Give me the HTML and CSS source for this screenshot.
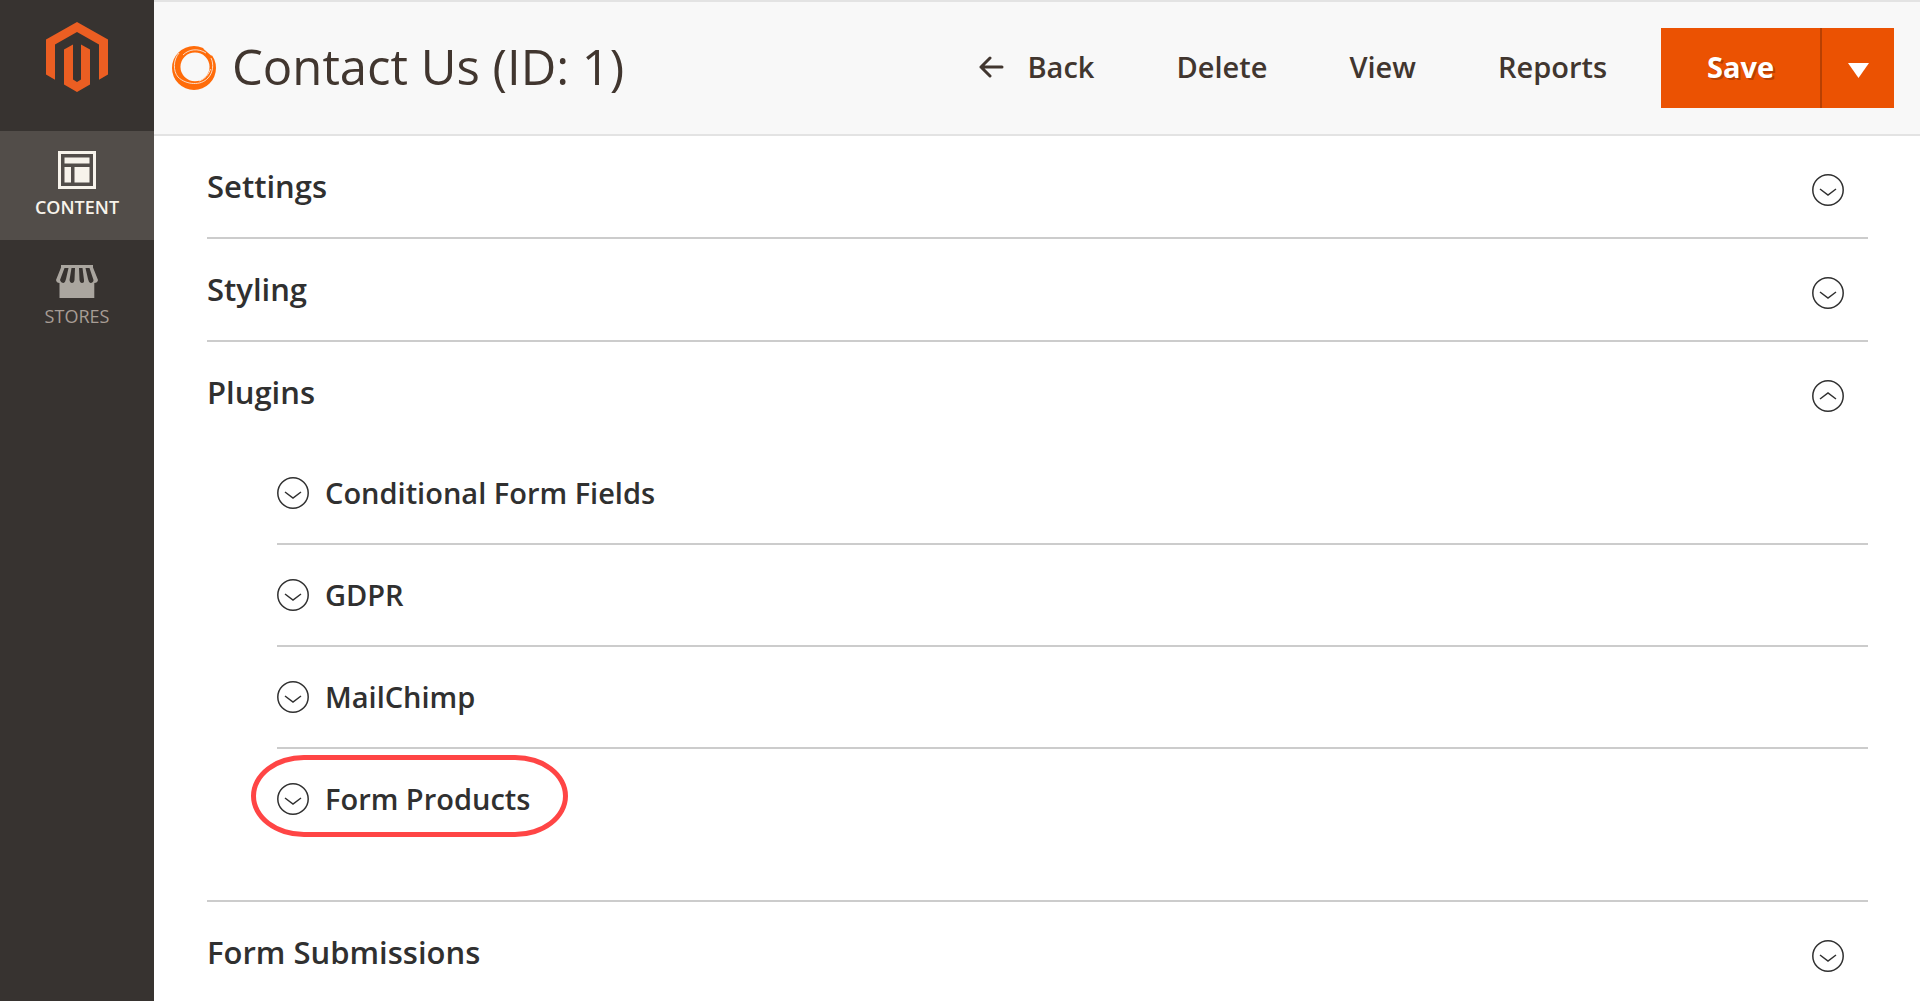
FILE: index.html
```html
<!DOCTYPE html>
<html lang="en">
<head>
<meta charset="utf-8" />
<title>Contact Us (ID: 1)</title>
<link rel="stylesheet" href="styles.css">
</head>

<body>

<!-- shared icons -->
<svg class="sprite" aria-hidden="true">
	<symbol id="icon-down" viewBox="0 0 32 32">
		<circle cx="16" cy="16" r="15.2" />
		<path d="M8 15l8 6 8-6" />
	</symbol>
	<symbol id="icon-up" viewBox="0 0 32 32">
		<circle cx="16" cy="16" r="15.2" />
		<path d="M8 19l8-6 8 6" />
	</symbol>
</svg>

<nav class="sidebar">

	<a href="#" class="logo" aria-label="Dashboard">
		<svg width="62" height="70" viewBox="0 0 62 70">
			<path d="M31 0L62 17.500V52.500L53 57.700V22.500L31 10L9 22.500V57.700L0 52.500V17.500Z" />
			<path d="M18 27.500L27 22.500V57.500L31 60L35 57.500V22.500L44 27.500V62.500L31 70L18 62.500Z" />
		</svg>
	</a>

	<a href="#" class="menu-item active">
		<svg width="42" height="38" viewBox="0 0 42 38">
			<path fill-rule="evenodd" d="M2 0H40V38H2ZM5 3V35H37V3Z" />
			<path d="M8.500 6.500H33.500V12.500H8.500ZM8.500 16H15V31.500H8.500ZM18.500 16H33.500V31.500H18.500Z" />
		</svg>
		<span>Content</span>
	</a>

	<a href="#" class="menu-item">
		<svg width="42" height="38" viewBox="0 0 42 38">
			<path fill-rule="evenodd" d="M5 5H37V7.500L42 20Q41.500 23 38.300 23V38H3.500V23Q.5 23 0 20L5 7.500ZM8.500 8L4 20Q5 23 7.500 23Q9.500 22 10 19L12.500 8ZM15.500 8L13.500 20Q14 23 16 23Q18 23 18.500 20L19 8ZM23 8L23.500 20Q24 23 26 23Q28.500 23 28 20L26.500 8ZM29.500 8L32 19Q32.500 22 34.500 23Q37.500 22.500 37.500 20L33.500 8Z" />
		</svg>
		<span>Stores</span>
	</a>

</nav>

<div class="page">

	<header class="page-header">

		<svg class="ring" width="44" height="44" viewBox="0 0 44 44">
			<path fill-rule="evenodd" d="M22 0A22 22 0 0 1 22 44A22 22 0 0 1 22 0ZM23 6.500A14.500 14.300 0 0 0 23 35.200A14.500 14.300 0 0 0 23 6.500Z" />
			<path class="cut" d="M7 7C1 14 1 25 6 31C14 39 29 40 36 32C41 27 42 18 39 12" />
			<path class="cut" d="M11 9C17 3 26 2 34 7" />
			<path class="cut" d="M27 35C33 33 37 28 38.500 23" />
			<path class="cut wide" d="M32 2L40 9" />
		</svg>

		<h1>Contact Us (ID: 1)</h1>

		<div class="actions">
			<button type="button" class="action back">
				<svg width="25" height="22" viewBox="0 0 25 22">
					<path d="M11 2L2 11L11 20M2 11H23" />
				</svg>
				Back
			</button>
			<button type="button" class="action">Delete</button>
			<button type="button" class="action">View</button>
			<button type="button" class="action">Reports</button>
		</div>

		<div class="split">
			<button type="button" class="save">Save</button>
			<button type="button" class="toggle" aria-label="More save options">
				<svg width="21" height="15" viewBox="0 0 21 15">
					<path d="M0 0H21L10.500 15Z" />
				</svg>
			</button>
		</div>

	</header>

	<main class="sections">

		<section class="section">
			<button type="button" class="section-title">
				Settings
				<svg class="icon"><use href="#icon-down" /></svg>
			</button>
		</section>

		<section class="section">
			<button type="button" class="section-title">
				Styling
				<svg class="icon"><use href="#icon-down" /></svg>
			</button>
		</section>

		<section class="section">
			<button type="button" class="section-title">
				Plugins
				<svg class="icon"><use href="#icon-up" /></svg>
			</button>

			<ul class="plugins">
				<li>
					<button type="button" class="plugin-title">
						<svg class="icon"><use href="#icon-down" /></svg>
						Conditional Form Fields
					</button>
				</li>
				<li>
					<button type="button" class="plugin-title">
						<svg class="icon"><use href="#icon-down" /></svg>
						GDPR
					</button>
				</li>
				<li>
					<button type="button" class="plugin-title">
						<svg class="icon"><use href="#icon-down" /></svg>
						MailChimp
					</button>
				</li>
				<li class="marked">
					<button type="button" class="plugin-title">
						<svg class="icon"><use href="#icon-down" /></svg>
						Form Products
					</button>
				</li>
			</ul>
		</section>

		<section class="section">
			<button type="button" class="section-title">
				Form Submissions
				<svg class="icon"><use href="#icon-down" /></svg>
			</button>
		</section>

	</main>

</div>

</body>
</html>
```

FILE: styles.css
```css
*,
*::after {
	box-sizing: border-box;
}

body {
	margin: 0;
	display: flex;
	min-height: 100vh;
	background: #fff;
	color: #303030;
	font: 600 29px/40px "Open Sans", "Noto Sans", sans-serif;
}

button {
	margin: 0;
	padding: 0;
	border: 0;
	background: none;
	color: inherit;
	font: inherit;
	text-align: left;
	cursor: pointer;
}

svg {
	display: block;
	flex: none;
}

.sprite {
	position: absolute;
	width: 0;
	height: 0;
}

/* sidebar */

.sidebar {
	flex: none;
	width: 154px;
	background: #373330;
}

.logo {
	display: flex;
	justify-content: center;
	height: 131px;
	padding-top: 22px;
	fill: #eb5e22;
}

.menu-item {
	display: flex;
	flex-direction: column;
	align-items: center;
	gap: 6px;
	height: 109px;
	padding-top: 20px;
	color: #a79d95;
	fill: #aaa69f;
	font-size: 18px;
	font-weight: 400;
	line-height: 24px;
	text-decoration: none;
	text-transform: uppercase;
}

.menu-item.active {
	background: #524d49;
	color: #f7f3eb;
	fill: #f7f3eb;
	font-weight: 600;
}

/* header */

.page {
	flex: 1;
	min-width: 0;
}

.page-header {
	display: flex;
	align-items: center;
	height: 136px;
	padding: 0 26px 0 18px;
	border-top: 2px solid #e3e3e3;
	border-bottom: 2px solid #e3e3e3;
	background: #f8f8f8;
	color: #41362f;
}

.ring {
	margin-right: 16px;
	fill: #ff6c0a;
}

.ring .cut {
	fill: none;
	stroke: #f8f8f8;
	stroke-width: .8px;
}

.ring .wide {
	stroke-width: 2px;
}

h1 {
	margin: 0;
	padding-bottom: 4px;
	font-size: 49px;
	font-weight: 400;
	line-height: 68px;
}

.actions {
	display: flex;
	gap: 82px;
	margin-left: auto;
	margin-right: 54px;
}

.back {
	display: flex;
	align-items: center;
	gap: 24px;
}

.back svg {
	fill: none;
	stroke: #41362f;
	stroke-width: 3;
	stroke-linecap: round;
	stroke-linejoin: round;
}

.split {
	display: flex;
	height: 80px;
	background: #eb5202;
	color: #fff;
}

.save {
	width: 161px;
	border-right: 2px solid #b84002;
	font-weight: 700;
	text-align: center;
	text-shadow: 2px 2px 0 #b84002;
}

.actions,
.save {
	padding-bottom: 2px;
}

.toggle {
	display: flex;
	align-items: center;
	justify-content: center;
	width: 72px;
	padding-top: 4px;
	fill: #fff;
}

/* collapsible sections */

.sections {
	padding: 0 52px 0 53px;
}

.section {
	border-bottom: 2px solid #ccc;
}

.section:last-child {
	border-bottom: 0;
}

.section-title {
	display: flex;
	align-items: flex-end;
	justify-content: space-between;
	width: 100%;
	padding: 30px 24px 31px 0;
	font-size: 31px;
}

.section:last-child .section-title {
	padding-bottom: 0;
}

.icon {
	width: 32px;
	height: 32px;
	fill: none;
	stroke: #303030;
	stroke-width: 1.500px;
}

.plugins {
	margin: 0;
	padding: 0 0 51px 70px;
	list-style: none;
}

.plugins li {
	border-bottom: 2px solid #ccc;
}

.plugins li:last-child {
	border-bottom: 0;
}

.plugin-title {
	display: flex;
	align-items: center;
	gap: 16px;
	width: 100%;
	padding: 30px 0;
}

.marked {
	position: relative;
}

/* red outline around the highlighted plugin */
.marked::after {
	content: "";
	position: absolute;
	top: 6px;
	left: -26px;
	width: 317px;
	height: 82px;
	border: 5px solid #ff4545;
	border-radius: 53px / 41px;
	pointer-events: none;
}
```
